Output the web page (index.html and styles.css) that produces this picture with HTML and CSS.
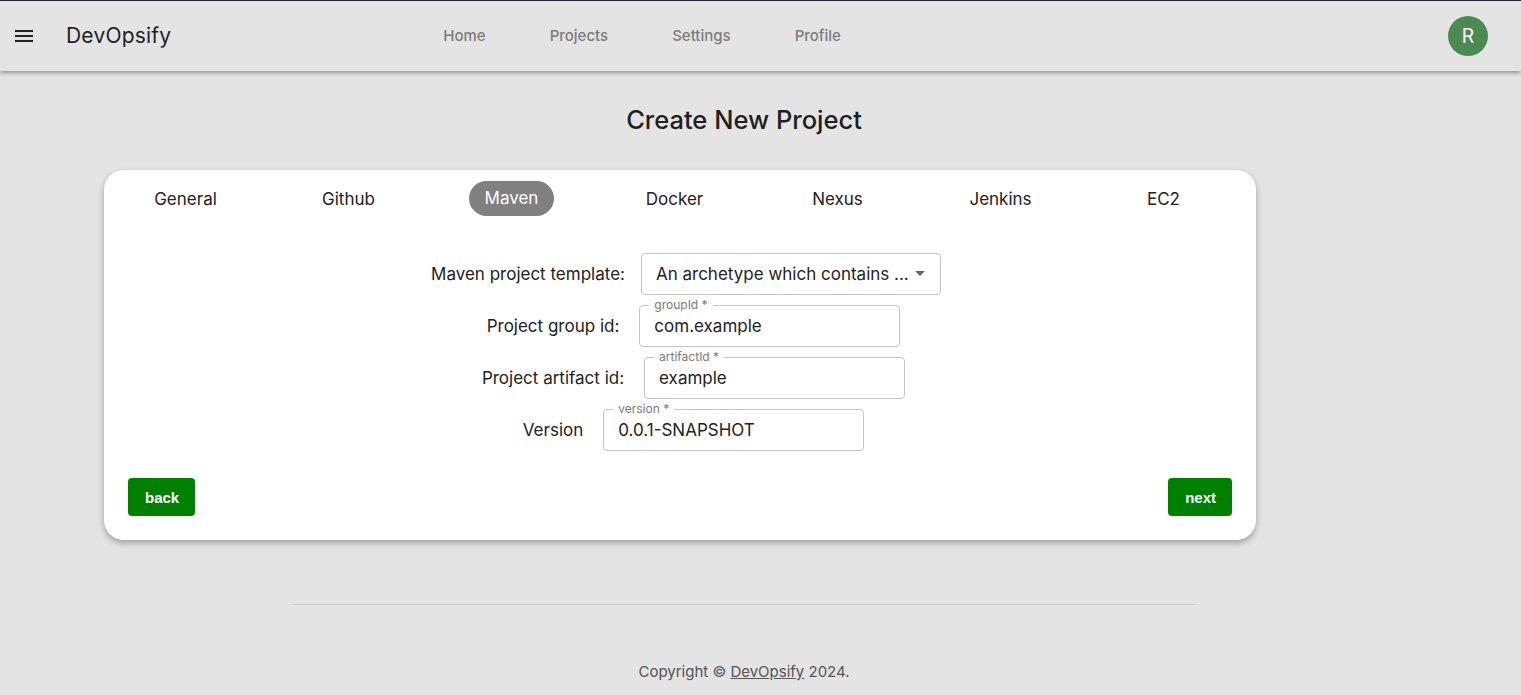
FILE: index.html
```html
<!DOCTYPE html>
<html lang="en">
<head>
<meta charset="utf-8">
<title>DevOpsify - Create New Project</title>
<link rel="stylesheet" href="styles.css">
</head>
<body>
<header class="topbar">
  <button class="menu-btn" aria-label="menu">
    <svg width="24" height="24" viewBox="0 0 24 24"><path d="M3 18h18v-2H3v2zm0-5h18v-2H3v2zm0-7v2h18V6H3z" fill="#222"/></svg>
  </button>
  <div class="brand">DevOpsify</div>
  <nav class="nav">
    <a href="#">Home</a>
    <a href="#">Projects</a>
    <a href="#">Settings</a>
    <a href="#">Profile</a>
  </nav>
  <div class="avatar">R</div>
</header>

<main class="main">
  <h1 class="title">Create New Project</h1>
  <section class="card">
    <div class="tabs">
      <div class="tab">General</div>
      <div class="tab">Github</div>
      <div class="tab"><span class="pill">Maven</span></div>
      <div class="tab">Docker</div>
      <div class="tab">Nexus</div>
      <div class="tab">Jenkins</div>
      <div class="tab">EC2</div>
    </div>

    <div class="form">
      <div class="row row-first">
        <span class="label">Maven project template:</span>
        <div class="select">
          <span>An archetype which contains ...</span>
          <svg class="caret" width="12" height="6" viewBox="0 0 12 6"><path d="M1 0h10L6 5z" fill="#666"/></svg>
        </div>
      </div>
      <div class="row">
        <span class="label">Project group id:</span>
        <div class="field"><span class="legend">groupId *</span>com.example</div>
      </div>
      <div class="row">
        <span class="label">Project artifact id:</span>
        <div class="field"><span class="legend">artifactId *</span>example</div>
      </div>
      <div class="row">
        <span class="label">Version</span>
        <div class="field"><span class="legend">version *</span>0.0.1-SNAPSHOT</div>
      </div>
    </div>

    <div class="actions">
      <button class="btn">back</button>
      <button class="btn">next</button>
    </div>
  </section>

  <footer class="footer">
    <hr class="rule">
    <p class="copy">Copyright © <a href="#">DevOpsify</a> 2024.</p>
  </footer>
</main>
</body>
</html>
```

FILE: styles.css
```css
* { box-sizing: border-box; }

html, body {
  margin: 0;
  background: #e4e4e4;
}

body {
  border-top: 1px solid #23252b;
  font-family: Inter, "Noto Sans", sans-serif;
  color: #222;
  height: 695px;
  overflow: hidden;
}

.topbar {
  height: 70px;
  display: flex;
  align-items: center;
  padding: 0 33px 0 12px;
  background: #e4e4e4;
  box-shadow: 0 2px 4px rgba(0, 0, 0, 0.35);
  position: relative;
  z-index: 1;
}

.menu-btn {
  width: 24px;
  height: 24px;
  padding: 0;
  border: 0;
  background: none;
  display: flex;
}

.brand {
  margin-left: 30px;
  font-size: 21px;
  font-weight: 400;
  color: #1f1f1f;
  letter-spacing: 0.2px;
  line-height: 24px;
}

.nav {
  display: flex;
  gap: 64px;
  margin-left: 272px;
  margin-top: -2px;
}

.nav a {
  font-size: 15px;
  color: #7c7c7c;
  text-decoration: none;
  font-weight: 500;
}

.avatar {
  margin-left: auto;
  width: 40px;
  height: 40px;
  border-radius: 50%;
  background: #4b8a50;
  color: #fff;
  font-family: Roboto, sans-serif;
  font-size: 20px;
  display: flex;
  align-items: center;
  justify-content: center;
}

.main {
  display: flex;
  flex-direction: column;
}

.title {
  margin: 33px 0 0;
  text-align: center;
  font-size: 25.5px;
  font-weight: 500;
  color: #1f1f1f;
  width: 1488px;
  line-height: 32px;
}

.card {
  margin: 34px 0 0 104px;
  width: 1152px;
  background: #fff;
  border-radius: 20px;
  box-shadow: 0 3px 6px rgba(0, 0, 0, 0.3);
  padding: 11px 24px 24px;
}

.tabs {
  display: grid;
  grid-template-columns: repeat(7, 163px);
  margin-left: -24px;
  height: 35px;
  align-items: center;
}

.tab {
  text-align: center;
  font-size: 17px;
  font-weight: 400;
  color: #222;
}

.pill {
  display: inline-block;
  background: #808080;
  color: #fff;
  border-radius: 18px;
  height: 35px;
  line-height: 35px;
  padding: 0 16px;
}

.form {
  margin-top: 37px;
  display: flex;
  flex-direction: column;
  align-items: center;
  gap: 10px;
  padding-left: 27px;
}

.row {
  display: flex;
  align-items: center;
  gap: 20px;
}

.row-first {
  gap: 16px;
  margin-right: 15px;
}

.label {
  font-size: 17px;
  color: #222;
}

.select {
  width: 300px;
  height: 42px;
  border: 1px solid #c4c4c4;
  border-radius: 4px;
  display: flex;
  align-items: center;
  padding: 0 14px;
  font-size: 17px;
  color: #222;
}

.caret {
  margin-left: auto;
}

.field {
  position: relative;
  width: 261px;
  height: 42px;
  border: 1px solid #c4c4c4;
  border-radius: 4px;
  display: flex;
  align-items: center;
  padding: 0 14px;
  font-size: 17px;
  color: #222;
}

.legend {
  position: absolute;
  top: -9px;
  left: 9px;
  padding: 0 5px;
  background: #fff;
  font-size: 12px;
  line-height: 16px;
  color: #7a7a7a;
}

.actions {
  margin-top: 27px;
  display: flex;
  justify-content: space-between;
}

.btn {
  height: 38px;
  padding: 0 16px 0 17px;
  border: 0;
  border-radius: 4px;
  background: #008000;
  color: #fff;
  font-family: "Liberation Sans", Arial, sans-serif;
  font-weight: 700;
  font-size: 15px;
}

.footer {
  width: 1488px;
  display: flex;
  flex-direction: column;
  align-items: center;
}

.rule {
  margin: 64px 0 0;
  width: 902px;
  border: 0;
  border-top: 1px solid #c9c9c9;
}

.copy {
  margin: 57px 0 0;
  font-size: 15px;
  color: #555;
}

.copy a {
  color: #555;
}
```
